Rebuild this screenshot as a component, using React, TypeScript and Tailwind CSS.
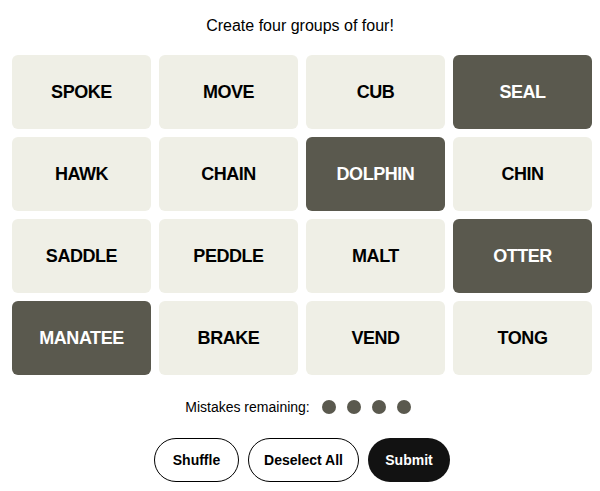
const words = [
  'SPOKE', 'MOVE', 'CUB', 'SEAL',
  'HAWK', 'CHAIN', 'DOLPHIN', 'CHIN',
  'SADDLE', 'PEDDLE', 'MALT', 'OTTER',
  'MANATEE', 'BRAKE', 'VEND', 'TONG',
];

const selected = new Set(['SEAL', 'DOLPHIN', 'OTTER', 'MANATEE']);

export default function App() {
  return (
    <div className="w-[600px] h-[491px] bg-white font-['Liberation_Sans',Arial,sans-serif] text-black">
      <p className="pt-[16px] h-[55px] text-center text-[16px] leading-[20px]">Create four groups of four!</p>
      <div className="grid grid-cols-4 gap-2 pl-3 pr-2">
        {words.map((w) => {
          const on = selected.has(w);
          return (
            <div
              key={w}
              className={
                on
                  ? 'flex h-[74px] items-center justify-center rounded-md bg-[#5a594e] text-[18px] font-bold tracking-tight text-white'
                  : 'flex h-[74px] items-center justify-center rounded-md bg-[#efefe6] text-[18px] font-bold tracking-tight text-black'
              }
            >
              {w}
            </div>
          );
        })}
      </div>
      <div className="mt-[22px] flex h-[20px] items-center justify-center pr-[4px] text-[14px]">
        <span className="mr-[12px]">Mistakes remaining:</span>
        <div className="flex gap-[11px]">
          {[0, 1, 2, 3].map((i) => (
            <span key={i} className="h-[14px] w-[14px] rounded-full bg-[#5a594e]" />
          ))}
        </div>
      </div>
      <div className="mt-[21px] flex justify-center gap-[9px] pl-[4px]">
        <button className="h-[44px] w-[85px] rounded-full border border-black text-[14px] font-semibold">Shuffle</button>
        <button className="h-[44px] w-[111px] rounded-full border border-black text-[14px] font-semibold">Deselect All</button>
        <button className="h-[44px] w-[82px] rounded-full bg-[#121212] text-[14px] font-bold text-white">Submit</button>
      </div>
    </div>
  );
}
